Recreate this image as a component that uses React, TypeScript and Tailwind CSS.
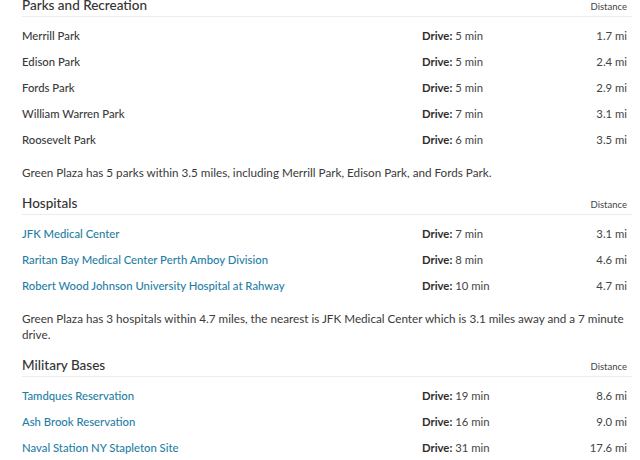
import React from 'react';

interface Place {
  name: string;
  drive: string;
  distance: string;
}

interface Section {
  title: string;
  link: boolean;
  places: Place[];
  summary: string;
}

const sections: Section[] = [
  {
    title: 'Parks and Recreation',
    link: false,
    places: [
      { name: 'Merrill Park', drive: '5 min', distance: '1.7 mi' },
      { name: 'Edison Park', drive: '5 min', distance: '2.4 mi' },
      { name: 'Fords Park', drive: '5 min', distance: '2.9 mi' },
      { name: 'William Warren Park', drive: '7 min', distance: '3.1 mi' },
      { name: 'Roosevelt Park', drive: '6 min', distance: '3.5 mi' },
    ],
    summary:
      'Green Plaza has 5 parks within 3.5 miles, including Merrill Park, Edison Park, and Fords Park.',
  },
  {
    title: 'Hospitals',
    link: true,
    places: [
      { name: 'JFK Medical Center', drive: '7 min', distance: '3.1 mi' },
      { name: 'Raritan Bay Medical Center Perth Amboy Division', drive: '8 min', distance: '4.6 mi' },
      { name: 'Robert Wood Johnson University Hospital at Rahway', drive: '10 min', distance: '4.7 mi' },
    ],
    summary:
      'Green Plaza has 3 hospitals within 4.7 miles, the nearest is JFK Medical Center which is 3.1 miles away and a 7 minute drive.',
  },
  {
    title: 'Military Bases',
    link: true,
    places: [
      { name: 'Tamdques Reservation', drive: '19 min', distance: '8.6 mi' },
      { name: 'Ash Brook Reservation', drive: '16 min', distance: '9.0 mi' },
      { name: 'Naval Station NY Stapleton Site', drive: '31 min', distance: '17.6 mi' },
    ],
    summary: '',
  },
];

function NearbySection({ section }: { section: Section }) {
  return (
    <div className="mt-[15px] first:-mt-[3px]">
      <div className="flex items-end justify-between border-b border-[#ececec] pb-[3px] pr-[5px]">
        <h3 className="text-[13.5px] leading-[16px] font-medium text-[#333]">{section.title}</h3>
        <span className="text-[9.5px] leading-[12px] text-[#444]">Distance</span>
      </div>

      <ul className="mt-[6px]">
        {section.places.map((place) => (
          <li key={place.name} className="flex items-center h-[26px] text-[11.3px] pr-[5px]">
            <span
              className={`flex-1 font-medium ${section.link ? 'text-[#1f7ea6]' : 'text-[#3a3a3a]'}`}
            >
              {place.name}
            </span>
            <span className="w-[145px] text-[#444]">
              <span className="font-bold text-[#2e2e2e]">Drive:</span> {place.drive}
            </span>
            <span className="w-[60px] text-right text-[#444]">{place.distance}</span>
          </li>
        ))}
      </ul>

      {section.summary && (
        <p className="mt-[11px] text-[11.7px] leading-[16px] text-[#3a3a3a]">{section.summary}</p>
      )}
    </div>
  );
}

export default function App() {
  return (
    <div
      className="w-[640px] h-[460px] overflow-hidden bg-white pl-[22px] pr-[8px]"
      style={{ fontFamily: 'Lato, "Noto Sans", sans-serif' }}
    >
      {sections.map((section) => (
        <NearbySection key={section.title} section={section} />
      ))}
    </div>
  );
}
